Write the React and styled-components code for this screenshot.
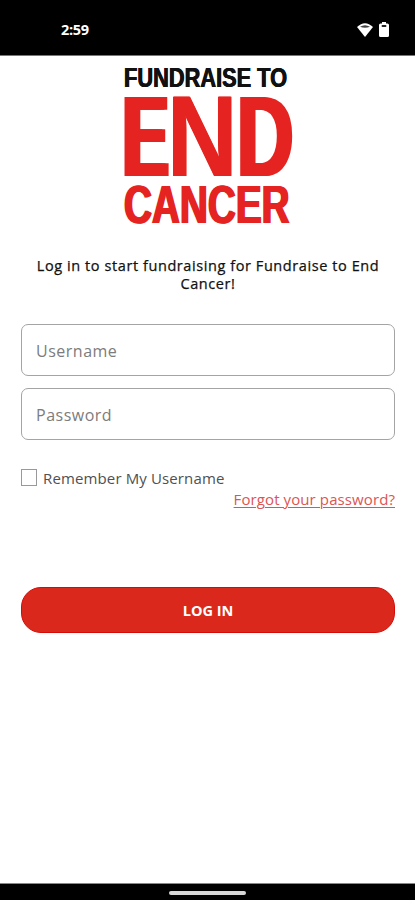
import React from "react";
import styled, { createGlobalStyle } from "styled-components";

const GlobalStyle = createGlobalStyle`
  *, *::before, *::after { box-sizing: border-box; }
  body { margin: 0; background: #fff; }
`;

const Screen = styled.div`
  width: 415px;
  height: 900px;
  display: flex;
  flex-direction: column;
  overflow: hidden;
  background: #fff;
  font-family: "Open Sans", "Noto Sans", sans-serif;
`;

const StatusBar = styled.header`
  height: 56px;
  flex: none;
  display: flex;
  justify-content: space-between;
  align-items: center;
  padding: 5px 26px 0 61px;
  background: #000;
  border-bottom: 1px solid #777;
`;

const Clock = styled.time`
  color: #fff;
  font: 700 14.5px/20px "Open Sans", sans-serif;
  letter-spacing: -0.3px;
`;

const StatusIcons = styled.div`
  display: flex;
  align-items: center;
  gap: 6px;
  margin-top: -1px;
  svg { display: block; }
`;

const Content = styled.main`
  flex: 1;
  display: flex;
  flex-direction: column;
  padding: 0 20px 0 21px;
`;

const Logo = styled.h1`
  margin: 0 0 0 102px;
  height: 174px;
  padding-top: 7px;
  display: flex;
  flex-direction: column;
  align-items: flex-start;
  font-family: "Liberation Sans", Arial, sans-serif;
  font-weight: 700;
`;

const LogoLine = styled.span`
  display: block;
  white-space: nowrap;
  margin-left: ${(p) => p.$indent}px;
  height: ${(p) => p.$height}px;
  line-height: ${(p) => p.$height}px;
  font-size: ${(p) => p.$size}px;
  color: ${(p) => p.$color};
  text-shadow: ${(p) => p.$bold}px 0 0 currentColor, -${(p) => p.$bold}px 0 0 currentColor;
  transform: scaleX(${(p) => p.$stretch});
  transform-origin: left;
`;

const LogoWord = styled.span`
  display: flex;
  height: 89px;
  line-height: 91px;
  font-size: 115px;
  color: #e52421;
`;

const LogoLetter = styled.span`
  display: block;
  width: ${(p) => p.$width}px;
  text-shadow: ${(p) => p.$bold}px 0 0 currentColor, -${(p) => p.$bold}px 0 0 currentColor;
  transform: scaleX(${(p) => p.$stretch});
  transform-origin: left;
`;

const Intro = styled.p`
  margin: 27px 0 0;
  padding: 0 10px;
  color: #111;
  font-size: 14.5px;
  line-height: 18px;
  font-weight: 500;
  letter-spacing: 0.58px;
  -webkit-text-stroke: 0.25px #111;
  text-align: center;
`;

const Form = styled.form`
  display: flex;
  flex-direction: column;
  margin-top: 31px;
`;

const Field = styled.input`
  width: 100%;
  height: 52px;
  margin-bottom: 12px;
  padding: 2px 14px 0;
  border: 1px solid #a4a4a4;
  border-radius: 7px;
  background: #fff;
  color: #333;
  font: 400 16px "Open Sans", sans-serif;
  letter-spacing: 0.5px;
  outline: none;
  &::placeholder { color: #7c7c7c; opacity: 1; }
`;

const Remember = styled.label`
  display: flex;
  align-items: center;
  gap: 6px;
  height: 20px;
  margin-top: 16px;
  color: #505050;
  font-size: 15px;
  letter-spacing: 0.13px;
`;

const Checkbox = styled.input`
  appearance: none;
  width: 16px;
  height: 17px;
  margin: -1px 0 0;
  border: 1px solid #999;
  background: #fff;
`;

const Forgot = styled.a`
  align-self: flex-end;
  margin-top: 0;
  color: #dc5555;
  font-size: 15px;
  line-height: 22px;
  letter-spacing: 0.1px;
  text-decoration: underline;
  text-decoration-thickness: 1px;
  text-underline-offset: 2px;
`;

const LoginButton = styled.button`
  height: 46px;
  margin-top: 77px;
  padding: 0;
  border: 1px solid #d60b08;
  border-radius: 20px;
  background: #da291c;
  color: #fff;
  font: 700 14.5px "Open Sans", sans-serif;
`;

const NavigationBar = styled.footer`
  flex: none;
  height: 17px;
  display: flex;
  justify-content: center;
  padding: 7px 0 0;
  background: #000;
  border-top: 1px solid #888;
`;

const HomeHandle = styled.div`
  width: 77px;
  height: 4px;
  border-radius: 2px;
  background: #d8d8d8;
`;

function WifiIcon() {
  return (
    <svg width="16" height="14" viewBox="0 0 16 14">
      <path d="M0 4Q8-3.6 16 4L8 14Z" fill="#fff" />
      <path d="M3 3.8Q8 .8 13 3.8Q8 5.6 3 3.8Z" fill="#444" />
    </svg>
  );
}

function BatteryIcon() {
  return (
    <svg width="10" height="15" viewBox="0 0 10 15">
      <path d="M3 0h4v1.5h1.5Q10 1.5 10 3v10.5Q10 15 8.5 15h-7Q0 15 0 13.5V3Q0 1.5 1.5 1.5H3Z" fill="#fff" />
      <rect x="2.6" y="3" width="4.8" height="2" rx="0.8" fill="#222" />
    </svg>
  );
}

export default function App() {
  return (
    <>
      <GlobalStyle />
      <Screen>
        <StatusBar>
          <Clock>2:59</Clock>
          <StatusIcons>
            <WifiIcon />
            <BatteryIcon />
          </StatusIcons>
        </StatusBar>
        <Content>
          <Logo>
            <LogoLine $height={28} $size={28.5} $color="#111" $stretch={0.765} $indent={1} $bold={0.5}>FUNDRAISE TO</LogoLine>
            <LogoWord>
              <LogoLetter $width={43.9} $stretch={0.59} $bold={4.9}>E</LogoLetter>
              <LogoLetter $width={70.6} $stretch={0.85} $bold={0.5}>N</LogoLetter>
              <LogoLetter $width={56} $stretch={0.68} $bold={3.1}>D</LogoLetter>
            </LogoWord>
            <LogoLine $height={50} $size={53} $color="#e52421" $stretch={0.73} $indent={1} $bold={1.2}>CANCER</LogoLine>
          </Logo>
          <Intro>Log in to start fundraising for Fundraise to End Cancer!</Intro>
          <Form onSubmit={(e) => e.preventDefault()}>
            <Field placeholder="Username" aria-label="Username" />
            <Field type="password" placeholder="Password" aria-label="Password" />
            <Remember>
              <Checkbox type="checkbox" />
              Remember My Username
            </Remember>
            <Forgot href="#">Forgot your password?</Forgot>
            <LoginButton type="submit">LOG IN</LoginButton>
          </Form>
        </Content>
        <NavigationBar>
          <HomeHandle />
        </NavigationBar>
      </Screen>
    </>
  );
}
